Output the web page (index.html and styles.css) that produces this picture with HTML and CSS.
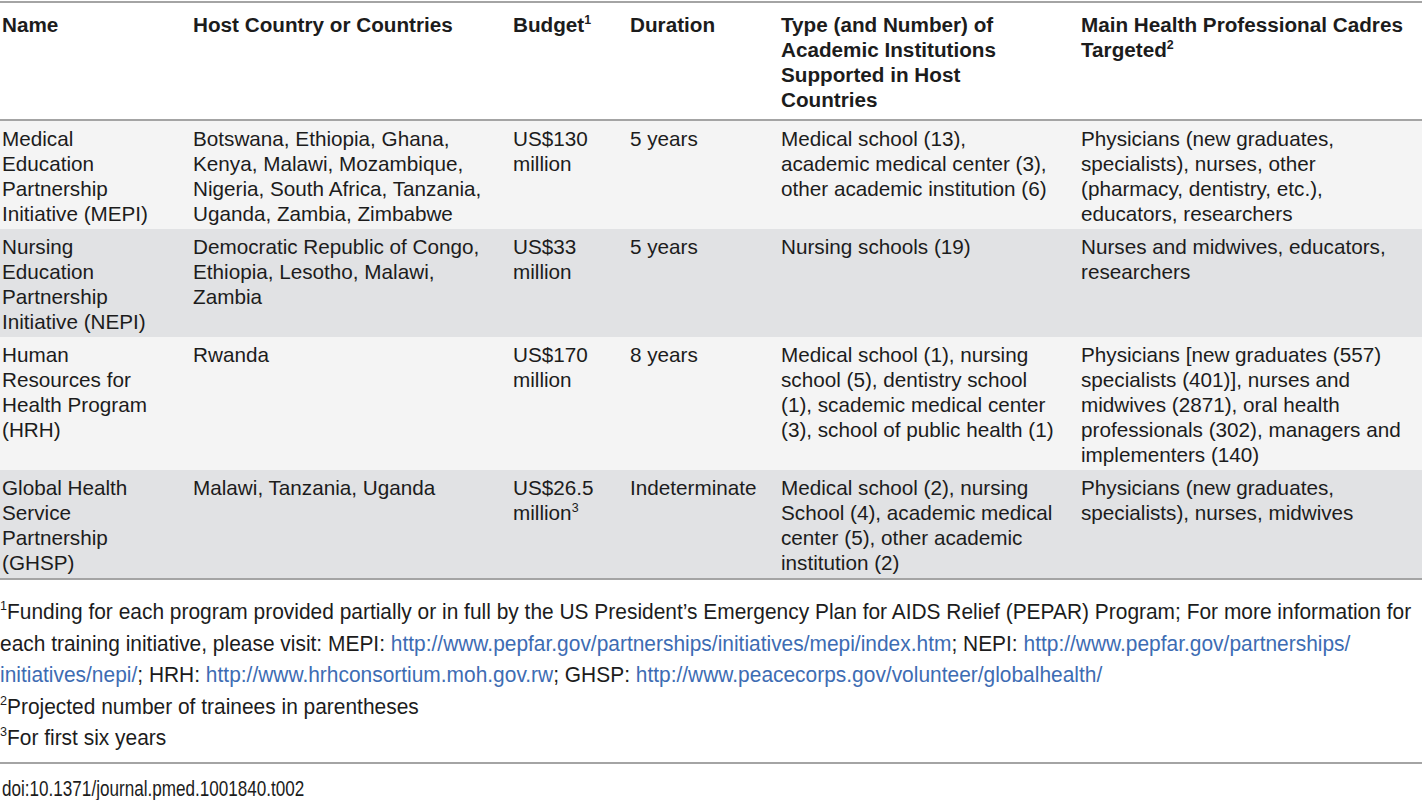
FILE: index.html
```html
<!DOCTYPE html>
<html lang="en">
<head>
  <meta charset="UTF-8" />
  <meta name="viewport" content="width=device-width, initial-scale=1.0" />
  <title>Table 2. Health professional education partnership initiatives</title>
  <link rel="stylesheet" href="styles.css">
</head>
<body>
  <div class="table-wrap">
    <!-- Tabla principal -->
    <table class="data-table">
      <colgroup>
        <col class="c-name" />
        <col class="c-host" />
        <col class="c-budget" />
        <col class="c-duration" />
        <col class="c-type" />
        <col class="c-cadres" />
      </colgroup>
      <thead>
        <tr>
          <th class="col-name">Name</th>
          <th>Host Country or Countries</th>
          <th>Budget<sup>1</sup></th>
          <th>Duration</th>
          <th class="col-type">Type (and Number) of Academic Institutions Supported in Host Countries</th>
          <th>Main Health Professional Cadres Targeted<sup>2</sup></th>
        </tr>
      </thead>
      <tbody>
        <tr>
          <td class="col-name">Medical Education Partnership Initiative (MEPI)</td>
          <td>Botswana, Ethiopia, Ghana, Kenya, Malawi, Mozambique, Nigeria, South Africa, Tanzania, Uganda, Zambia, Zimbabwe</td>
          <td>US$130 million</td>
          <td>5 years</td>
          <td class="col-type">Medical school (13), academic medical center (3), other academic institution (6)</td>
          <td>Physicians (new graduates, specialists), nurses, other (pharmacy, dentistry, etc.), educators, researchers</td>
        </tr>
        <tr>
          <td class="col-name">Nursing Education Partnership Initiative (NEPI)</td>
          <td>Democratic Republic of Congo, Ethiopia, Lesotho, Malawi, Zambia</td>
          <td>US$33 million</td>
          <td>5 years</td>
          <td class="col-type">Nursing schools (19)</td>
          <td>Nurses and midwives, educators, researchers</td>
        </tr>
        <tr>
          <td class="col-name">Human Resources for Health Program (HRH)</td>
          <td>Rwanda</td>
          <td>US$170 million</td>
          <td>8 years</td>
          <td class="col-type">Medical school (1), nursing school (5), dentistry school (1), scademic medical center (3), school of public health (1)</td>
          <td>Physicians [new graduates (557) specialists (401)], nurses and midwives (2871), oral health professionals (302), managers and implementers (140)</td>
        </tr>
        <tr>
          <td class="col-name">Global Health Service Partnership (GHSP)</td>
          <td>Malawi, Tanzania, Uganda</td>
          <td>US$26.5 million<sup>3</sup></td>
          <td>Indeterminate</td>
          <td class="col-type">Medical school (2), nursing School (4), academic medical center (5), other academic institution (2)</td>
          <td>Physicians (new graduates, specialists), nurses, midwives</td>
        </tr>
      </tbody>
    </table>

    <!-- Notas al pie -->
    <div class="notes">
      <p><sup>1</sup>Funding for each program provided partially or in full by the US President’s Emergency Plan for AIDS Relief (PEPAR) Program; For more information for each training initiative, please visit: MEPI: <a href="#">http://www.pepfar.gov/partnerships/initiatives/mepi/index.htm</a>; NEPI: <a href="#">http://www.pepfar.gov/partnerships/<wbr>initiatives/nepi/</a>; HRH: <a href="#">http://www.hrhconsortium.moh.gov.rw</a>; GHSP: <a href="#">http://www.peacecorps.gov/volunteer/globalhealth/</a></p>
      <p><sup>2</sup>Projected number of trainees in parentheses</p>
      <p><sup>3</sup>For first six years</p>
    </div>

    <div class="doi"><span>doi:10.1371/journal.pmed.1001840.t002</span></div>
  </div>
</body>
</html>
```

FILE: styles.css
```css
/* Colores y tipografía */
:root {
  --text: #1c1c1c;
  --row-light: #f4f4f4;
  --row-dark: #e1e2e4;
  --rule: #a4a4a4;
  --link: #3d6cb3;
}

* {
  box-sizing: border-box;
}
body {
  margin: 0;
  background: #ffffff;
  color: var(--text);
  font-family: "Liberation Sans", Arial, sans-serif;
  overflow-x: hidden;
}

.table-wrap {
  width: 1422px;
  padding-top: 1px;
}

/* Tabla */
.data-table {
  width: 100%;
  table-layout: fixed;
  border-collapse: collapse;
  border-top: 2px solid var(--rule);
  border-bottom: 2px solid var(--rule);
  font-size: 20.7px;
  line-height: 25px;
}
.c-name { width: 191px; }
.c-host { width: 320px; }
.c-budget { width: 117px; }
.c-duration { width: 151px; }
.c-type { width: 300px; }
.c-cadres { width: 343px; }

.data-table th,
.data-table td {
  text-align: left;
  vertical-align: top;
  padding: 5px 10px 3px 2px;
}
.data-table .col-name {
  padding-right: 31px;
}
.data-table .col-type {
  padding-right: 23px;
}
.data-table th {
  font-weight: 700;
  padding-top: 9px;
  padding-bottom: 7px;
  border-bottom: 2px solid var(--rule);
}
.data-table tbody tr:nth-child(odd) {
  background-color: var(--row-light);
}
.data-table tbody tr:nth-child(even) {
  background-color: var(--row-dark);
}
.data-table sup {
  font-size: 0.6em;
  line-height: 0;
  vertical-align: 0.65em;
}

/* Notas (tipografía algo estrecha, como en el original) */
.notes {
  width: 1529px;
  margin-top: 16px;
  padding-bottom: 8px;
  border-bottom: 2px solid var(--rule);
  font-size: 22.5px;
  line-height: 31.6px;
  transform: scaleX(0.93);
  transform-origin: left top;
}
.notes p {
  margin: 0;
}
.notes sup {
  font-size: 0.6em;
  line-height: 0;
  vertical-align: 0.65em;
}
.notes a {
  color: var(--link);
  text-decoration: none;
}

.doi {
  padding: 10px 0 0 2px;
  font-size: 22.5px;
  line-height: 30px;
}
.doi span {
  display: inline-block;
  transform: scaleX(0.76);
  transform-origin: left center;
}
```
